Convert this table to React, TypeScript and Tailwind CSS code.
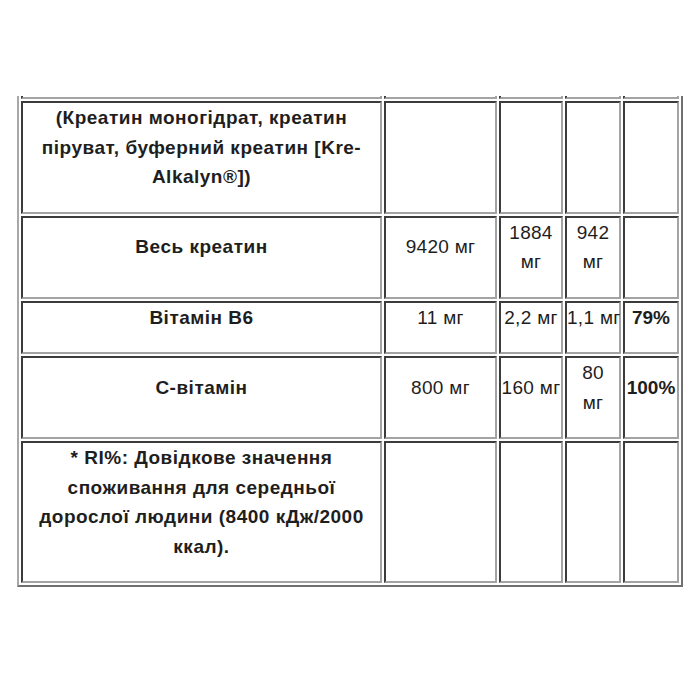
import React from 'react';

type Row = {
  name: string[];
  vals: string[][];
  boldLast?: boolean;
};

const rows: Row[] = [
  {
    name: ['(Креатин моногідрат, креатин', 'піруват, буферний креатин [Kre-', 'Alkalyn®])'],
    vals: [[], [], [], []],
  },
  {
    name: ['Весь креатин'],
    vals: [['9420 мг'], ['1884', 'мг'], ['942', 'мг'], []],
  },
  {
    name: ['Вітамін B6'],
    vals: [['11 мг'], ['2,2 мг'], ['1,1 мг'], ['79%']],
    boldLast: true,
  },
  {
    name: ['C-вітамін'],
    vals: [['800 мг'], ['160 мг'], ['80', 'мг'], ['100%']],
    boldLast: true,
  },
  {
    name: [
      '* RI%: Довідкове значення',
      'споживання для середньої',
      'дорослої людини (8400 кДж/2000',
      'ккал).',
    ],
    vals: [[], [], [], []],
  },
];

const cell =
  'border-2 border-t-[#3c3c3c] border-l-[#3c3c3c] border-r-[#a3a3a3] border-b-[#a3a3a3] p-0 pb-[20px] align-middle text-center leading-[29.5px] whitespace-nowrap';

const colWidths = ['w-[361px]', 'w-[113px]', 'w-[64px]', 'w-[56px]', 'w-[56px]'];

const Lines = ({ lines }: { lines: string[] }) => (
  <>
    {lines.map((l, i) => (
      <React.Fragment key={i}>
        {i > 0 && <br />}
        {l}
      </React.Fragment>
    ))}
  </>
);

export default function App() {
  return (
    <div className="w-[700px] h-[700px] bg-white pt-[96px] font-['Liberation_Sans',Arial,sans-serif] text-[19px] text-[#1e1e1e]">
      <div className="overflow-hidden">
        <table className="-mt-[41px] ml-[17px] w-[666px] table-fixed border-separate border-spacing-[2px] border-2 border-t-[#a8a8a8] border-l-[#a8a8a8] border-r-[#707070] border-b-[#707070]">
          <tbody>
            {/* previous row, mostly scrolled out of view */}
            <tr>
              {colWidths.map((w, i) => (
                <td key={i} className={`${w} h-[40px] border-2 border-t-[#3c3c3c] border-l-[#3c3c3c] border-r-[#a3a3a3] border-b-[#a3a3a3] p-0`} />
              ))}
            </tr>
            {rows.map((row, r) => (
              <tr key={r}>
                <td className={`${cell} font-bold tracking-[0.5px]`}>
                  <Lines lines={row.name} />
                </td>
                {row.vals.map((v, i) => (
                  <td
                    key={i}
                    className={`${cell} ${row.boldLast && i === 3 ? 'font-bold' : 'font-normal tracking-[0.3px]'}`}
                  >
                    <Lines lines={v} />
                  </td>
                ))}
              </tr>
            ))}
          </tbody>
        </table>
      </div>
    </div>
  );
}
